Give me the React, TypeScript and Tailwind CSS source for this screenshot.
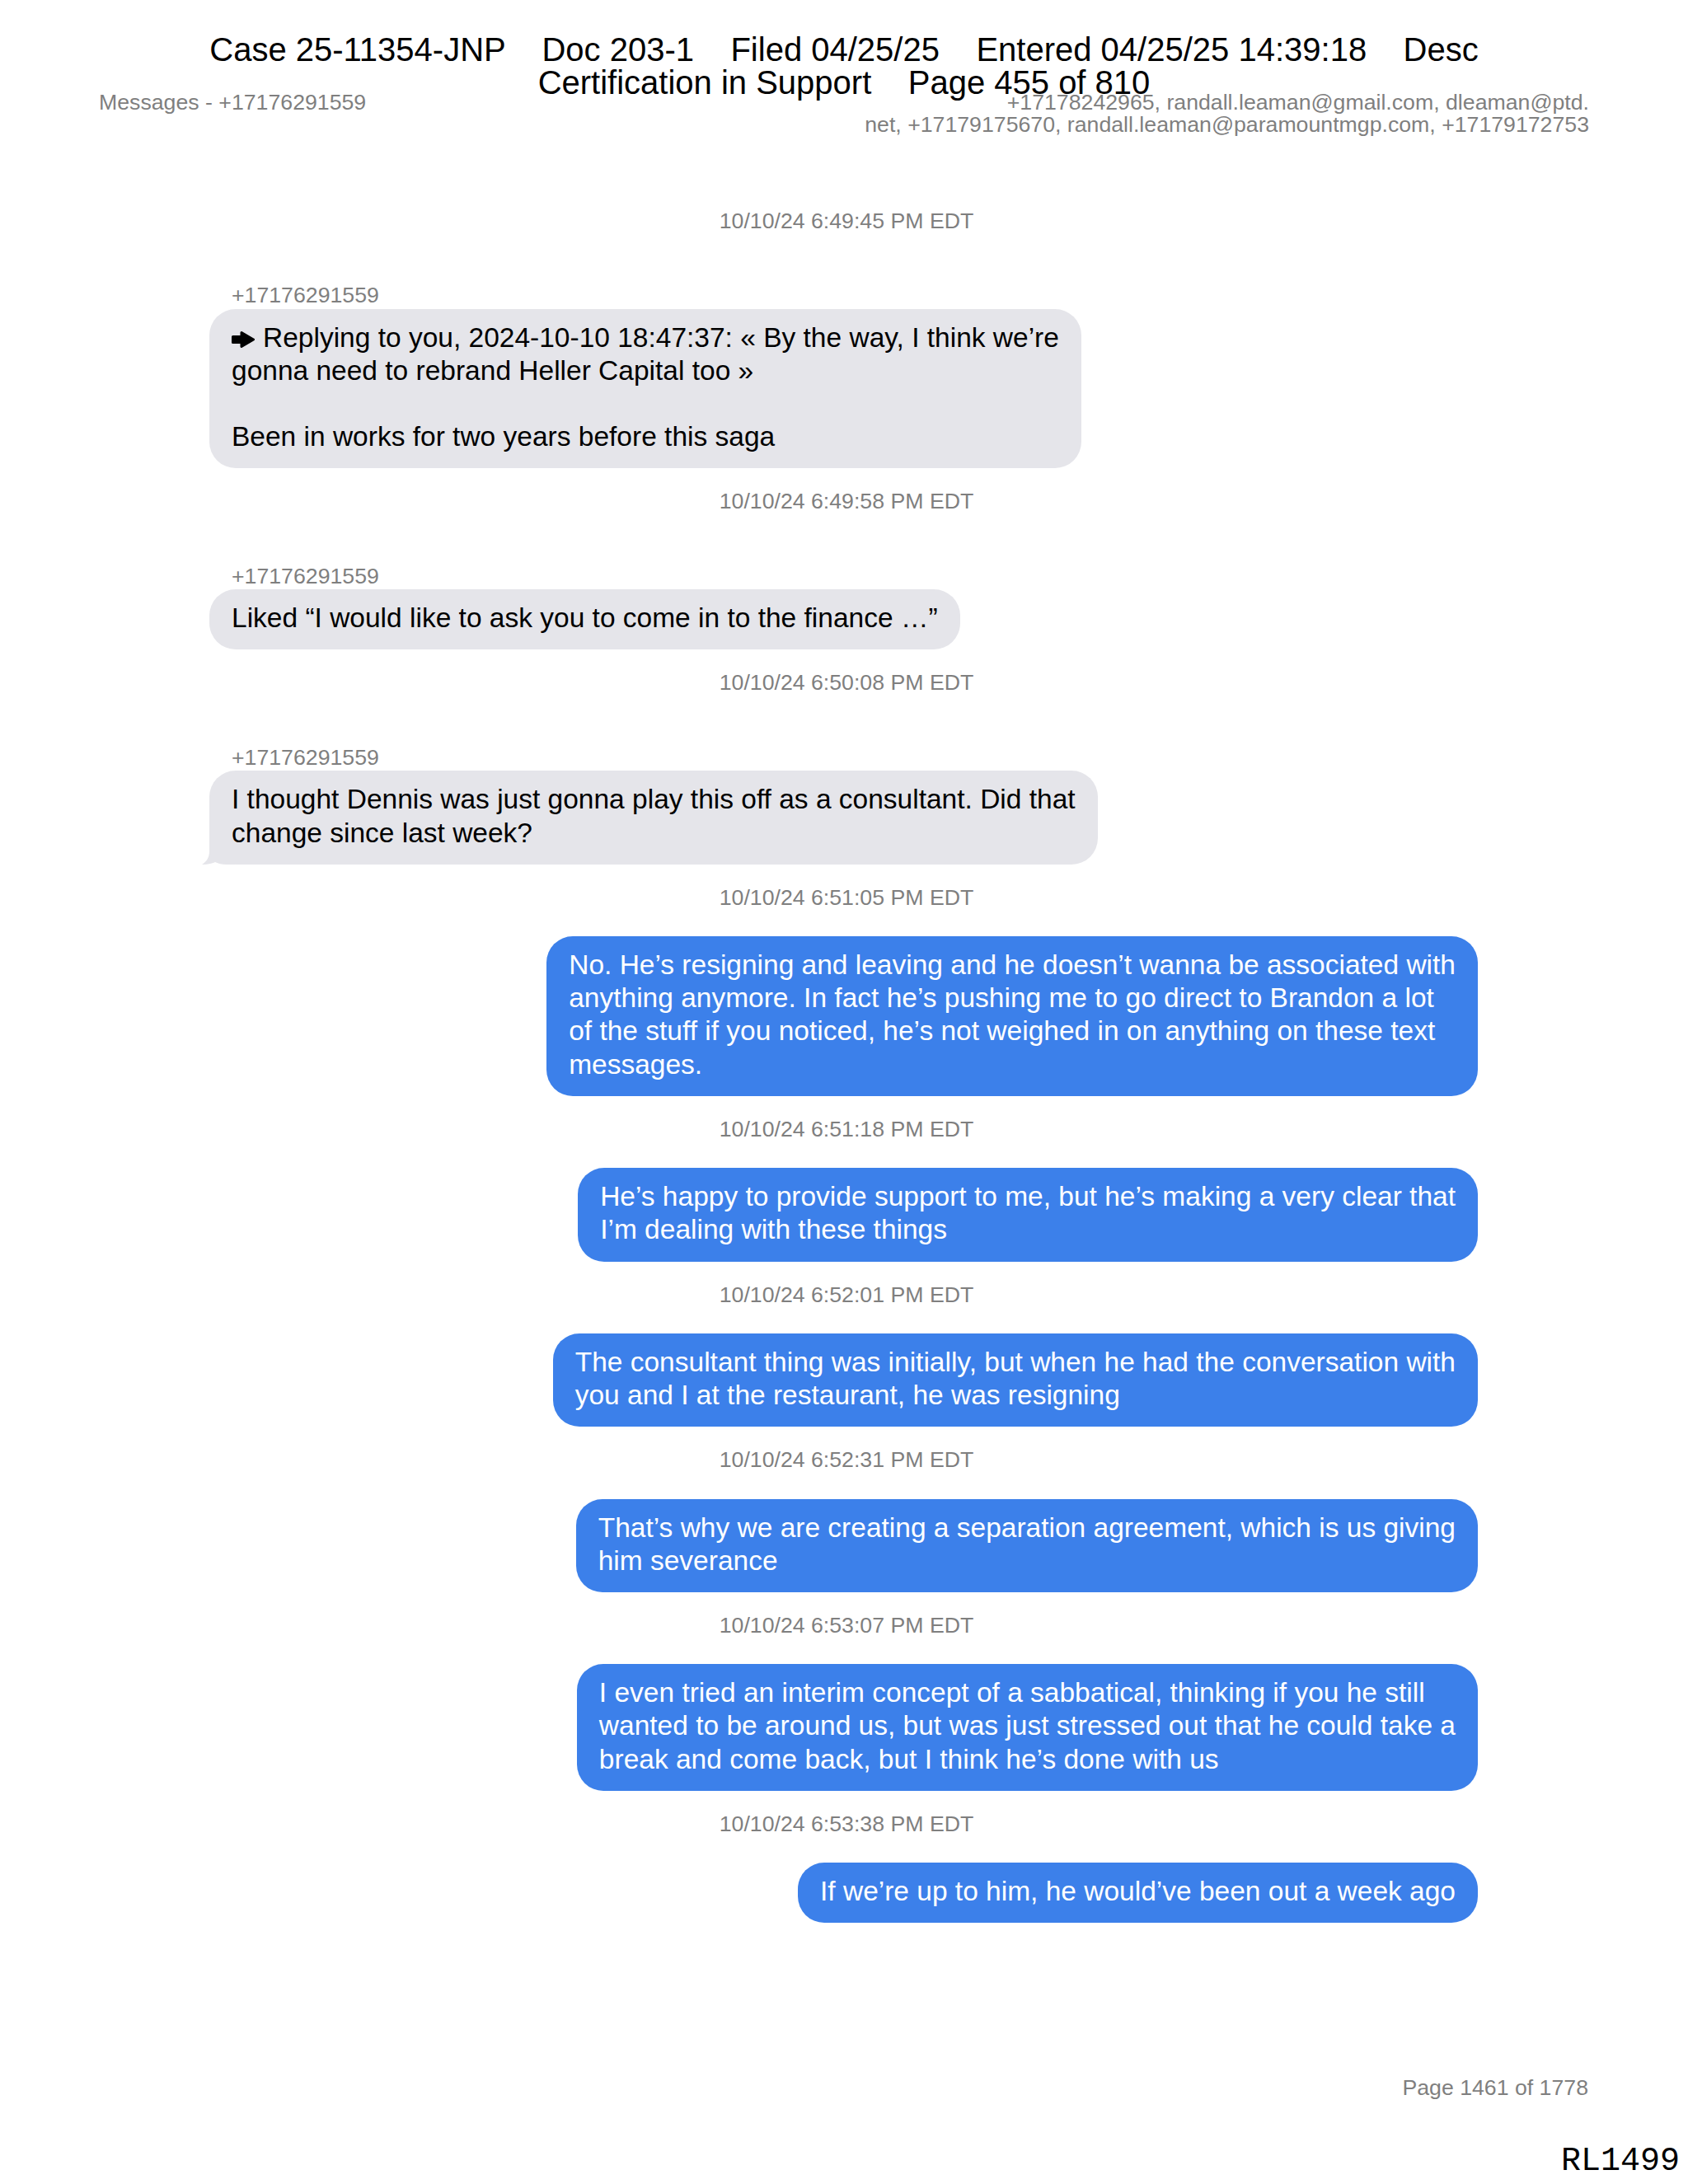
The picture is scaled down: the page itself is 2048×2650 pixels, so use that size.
import React from "react";

type Msg = {
  time: string;
  from?: string;
  lines: string[];
  tail?: boolean;
  reply?: boolean;
};

const messages: Msg[] = [
  {
    time: "10/10/24 6:49:45 PM EDT",
    from: "+17176291559",
    reply: true,
    lines: [
      "Replying to you, 2024-10-10 18:47:37: « By the way, I think we’re",
      "gonna need to rebrand Heller Capital too »",
      "",
      "Been in works for two years before this saga",
    ],
  },
  {
    time: "10/10/24 6:49:58 PM EDT",
    from: "+17176291559",
    lines: ["Liked “I would like to ask you to come in to the finance …”"],
  },
  {
    time: "10/10/24 6:50:08 PM EDT",
    from: "+17176291559",
    tail: true,
    lines: [
      "I thought Dennis was just gonna play this off as a consultant. Did that",
      "change since last week?",
    ],
  },
  {
    time: "10/10/24 6:51:05 PM EDT",
    lines: [
      "No. He’s resigning and leaving and he doesn’t wanna be associated with",
      "anything anymore. In fact he’s pushing me to go direct to Brandon a lot",
      "of the stuff if you noticed, he’s not weighed in on anything on these text",
      "messages.",
    ],
  },
  {
    time: "10/10/24 6:51:18 PM EDT",
    lines: [
      "He’s happy to provide support to me, but he’s making a very clear that",
      "I’m dealing with these things",
    ],
  },
  {
    time: "10/10/24 6:52:01 PM EDT",
    lines: [
      "The consultant thing was initially, but when he had the conversation with",
      "you and I at the restaurant, he was resigning",
    ],
  },
  {
    time: "10/10/24 6:52:31 PM EDT",
    lines: [
      "That’s why we are creating a separation agreement, which is us giving",
      "him severance",
    ],
  },
  {
    time: "10/10/24 6:53:07 PM EDT",
    lines: [
      "I even tried an interim concept of a sabbatical, thinking if you he still",
      "wanted to be around us, but was just stressed out that he could take a",
      "break and come back, but I think he’s done with us",
    ],
  },
  {
    time: "10/10/24 6:53:38 PM EDT",
    lines: ["If we’re up to him, he would’ve been out a week ago"],
  },
];

const ReplyArrow = () => (
  <svg
    width="28"
    height="20"
    viewBox="0 0 28 20"
    className="inline-block align-baseline mr-[10px] relative top-[1px]"
  >
    <path
      d="M1.5 6.5 H12 V1.5 L26.5 10 L12 18.5 V13.5 H1.5 Z"
      fill="#000"
      stroke="#000"
      strokeWidth="3"
      strokeLinejoin="round"
    />
  </svg>
);

const Bubble = ({ msg }: { msg: Msg }) => {
  const mine = !msg.from;
  return (
    <div
      className={
        mine
          ? "relative self-end mr-[255px] rounded-[32px] bg-[#3c80ea] text-white px-[27px] pt-[15px] pb-[18px]"
          : "relative self-start ml-[254px] rounded-[32px] bg-[#e5e5ea] text-black px-[27px] pt-[15px] pb-[18px]"
      }
    >
      {msg.tail && (
        <svg
          width="40"
          height="32"
          viewBox="0 0 40 32"
          className="absolute left-[-9px] bottom-0"
        >
          <path
            d="M9 0 L40 0 L40 32 L30 32 C24 32 20 31 16 29 C12 31 6 32 0 32 C5 29 9 24 9 16 Z"
            fill="#e5e5ea"
          />
        </svg>
      )}
      <div className="relative text-[33.5px] leading-[40.2px]">
        {msg.lines.map((line, i) => (
          <div key={i} className="whitespace-nowrap h-[40.2px]">
            {msg.reply && i === 0 && <ReplyArrow />}
            {line}
          </div>
        ))}
      </div>
    </div>
  );
};

export default function App() {
  return (
    <div className="relative w-[2048px] h-[2650px] bg-white flex flex-col font-['Liberation_Sans',Arial,sans-serif]">
      <div className="flex justify-between pt-[111px] px-[120px] text-[26.7px] leading-[27px] text-[#7f7f7f]">
        <div>Messages - +17176291559</div>
        <div className="text-right">
          <div>+17178242965, randall.leaman@gmail.com, dleaman@ptd.</div>
          <div>net, +17179175670, randall.leaman@paramountmgp.com, +17179172753</div>
        </div>
      </div>

      <div className="flex flex-col mt-[86.5px]">
        {messages.map((m, i) => (
          <React.Fragment key={i}>
            <div
              className={
                (i === 0 ? "" : "mt-[24px] ") +
                "pl-[6px] text-center text-[26.7px] leading-[32px] text-[#7f7f7f]"
              }
            >
              {m.time}
            </div>
            {m.from ? (
              <>
                <div className="mt-[58.5px] ml-[281px] text-[26.7px] leading-[32px] text-[#7f7f7f]">
                  {m.from}
                </div>
                <div className="mt-[0.5px] flex flex-col">
                  <Bubble msg={m} />
                </div>
              </>
            ) : (
              <div className="mt-[31.3px] flex flex-col">
                <Bubble msg={m} />
              </div>
            )}
          </React.Fragment>
        ))}
      </div>

      <div className="mt-auto flex flex-col items-end">
        <div className="pr-[121px] text-[26.7px] leading-[32px] text-[#7f7f7f]">
          Page 1461 of 1778
        </div>
        <div className="mt-[54px] pr-[10px] pb-[7px] text-[40px] leading-[40px] text-black font-['Liberation_Mono',monospace] font-light">
          RL1499
        </div>
      </div>

      <div className="absolute left-0 right-0 top-[39.5px] text-center text-[40px] leading-[40px] text-black whitespace-pre">
        <div>Case 25-11354-JNP    Doc 203-1    Filed 04/25/25    Entered 04/25/25 14:39:18    Desc</div>
        <div>Certification in Support    Page 455 of 810</div>
      </div>
    </div>
  );
}
